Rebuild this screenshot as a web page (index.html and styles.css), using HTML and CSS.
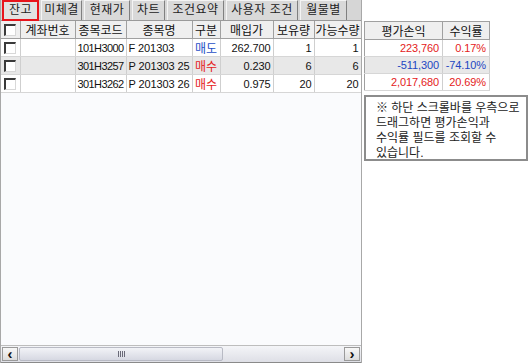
FILE: index.html
```html
<!DOCTYPE html>
<html lang="ko">
<head>
  <meta charset="UTF-8">
  <title>잔고</title>
  <link rel="stylesheet" href="styles.css">
</head>
<body>
  <div class="screen">

    <!-- Left grid panel -->
    <div class="panel">
      <div class="tabs">
        <div class="tab active">잔고</div>
        <div class="tab">미체결</div>
        <div class="tab">현재가</div>
        <div class="tab">차트</div>
        <div class="tab">조건요약</div>
        <div class="tab">사용자 조건</div>
        <div class="tab">월물별</div>
      </div>

      <div class="grid">
        <table class="balance">
          <colgroup>
            <col style="width:19px"><col style="width:55px"><col style="width:51px"><col style="width:66px">
            <col style="width:28px"><col style="width:53px"><col style="width:41px"><col style="width:47px">
          </colgroup>
          <thead>
            <tr>
              <th><span class="check"></span></th>
              <th>계좌번호</th>
              <th>종목코드</th>
              <th>종목명</th>
              <th>구분</th>
              <th>매입가</th>
              <th>보유량</th>
              <th>가능수량</th>
            </tr>
          </thead>
          <tbody>
            <tr>
              <td><span class="check"></span></td>
              <td></td>
              <td class="left code">101H3000</td>
              <td class="left">F 201303</td>
              <td class="sell">매도</td>
              <td class="num">262.700</td>
              <td class="num">1</td>
              <td class="num">1</td>
            </tr>
            <tr class="alt">
              <td><span class="check"></span></td>
              <td></td>
              <td class="left code">301H3257</td>
              <td class="left">P 201303 25</td>
              <td class="buy">매수</td>
              <td class="num">0.230</td>
              <td class="num">6</td>
              <td class="num">6</td>
            </tr>
            <tr>
              <td><span class="check"></span></td>
              <td></td>
              <td class="left code">301H3262</td>
              <td class="left">P 201303 26</td>
              <td class="buy">매수</td>
              <td class="num">0.975</td>
              <td class="num">20</td>
              <td class="num">20</td>
            </tr>
          </tbody>
        </table>
      </div>

      <div class="hscroll">
        <div class="arrow">&#8249;</div>
        <div class="track">
          <div class="thumb"><span class="grip"></span></div>
        </div>
        <div class="arrow">&#8250;</div>
      </div>
    </div>

    <!-- Right profit panel -->
    <div class="side">
      <table class="profit">
        <colgroup>
          <col style="width:78px"><col style="width:47px">
        </colgroup>
        <thead>
          <tr>
            <th>평가손익</th>
            <th>수익률</th>
          </tr>
        </thead>
        <tbody>
          <tr>
            <td class="num up">223,760</td>
            <td class="num up">0.17%</td>
          </tr>
          <tr class="alt">
            <td class="num down">-511,300</td>
            <td class="num down">-74.10%</td>
          </tr>
          <tr>
            <td class="num up">2,017,680</td>
            <td class="num up">20.69%</td>
          </tr>
        </tbody>
      </table>

      <div class="note">
        ※ 하단 스크롤바를 우측으로<br>
        드래그하면 평가손익과<br>
        수익률 필드를 조회할 수<br>
        있습니다.
      </div>
    </div>

  </div>
</body>
</html>
```

FILE: styles.css
```css
* {
  margin: 0;
  padding: 0;
  box-sizing: border-box;
}

body {
  background-color: #fff;
  color: #111;
  font-family: "Liberation Sans", "Noto Sans CJK KR", sans-serif;
  font-size: 12px;
}

.screen {
  display: flex;
  width: 530px;
  height: 363px;
}

/* Left panel */
.panel {
  width: 362px;
  display: flex;
  flex-direction: column;
  border-left: 1px solid #a8a8a8;
  border-right: 1px solid #a8a8a8;
}

.tabs {
  display: flex;
  height: 21px;
  background-color: #d6d6d6;
  border-bottom: 1px solid #9a9a9a;
  padding-left: 1px;
  gap: 2px;
}

.tab {
  height: 20px;
  line-height: 18px;
  text-align: center;
  background-color: #d9d9d9;
  border-top: 1px solid #f4f4f4;
  border-left: 1px solid #f4f4f4;
  border-right: 1px solid #808080;
  color: #222;
  letter-spacing: 0.5px;
}

.tab.active {
  width: 37px;
  height: 21px;
  background-color: #e2e2e2;
  border: 2px solid #e8141c;
  line-height: 16px;
}

.tabs .tab:nth-child(2) { width: 41px; }
.tabs .tab:nth-child(3) { width: 46px; }
.tabs .tab:nth-child(4) { width: 33px; }
.tabs .tab:nth-child(5) { width: 57px; }
.tabs .tab:nth-child(6) { width: 72px; }
.tabs .tab:nth-child(7) { width: 47px; }

.grid {
  flex: 1;
  background-color: #fafbfd;
  overflow: hidden;
}

table {
  border-collapse: collapse;
  table-layout: fixed;
}

.balance {
  width: 360px;
}

th {
  height: 16px;
  font-weight: normal;
  background-color: #efefef;
  border-right: 1px solid #a0a0a0;
  border-bottom: 1px solid #a0a0a0;
  text-align: center;
  white-space: nowrap;
  overflow: hidden;
  padding: 0;
}

td {
  height: 17px;
  background-color: #fff;
  border-right: 1px solid #cfcfcf;
  border-bottom: 1px solid #d6d6d6;
  white-space: nowrap;
  overflow: hidden;
  text-align: center;
  padding: 0 2px;
}

tr.alt td {
  background-color: #e8e8e8;
}

td.left,
td.num {
  font-size: 11px;
  letter-spacing: -0.1px;
}

td.left { text-align: left; }
td.num { text-align: right; }

td.code {
  padding: 0 0 0 2px;
  letter-spacing: -0.6px;
}

.sell { color: #1f4fc6; }
.buy { color: #e42121; }
.up { color: #e42121; }
.down { color: #2246c2; }

.check {
  display: inline-block;
  width: 12px;
  height: 12px;
  vertical-align: middle;
  background-color: #fff;
  border-top: 2px solid #3a3a3a;
  border-left: 2px solid #3a3a3a;
  border-right: 1px solid #d8d8d8;
  border-bottom: 1px solid #d8d8d8;
}

/* Horizontal scrollbar */
.hscroll {
  display: flex;
  height: 18px;
  border-top: 1px solid #bdbdbd;
  border-bottom: 1px solid #8a8a8a;
  background: linear-gradient(#f4f5f8, #dedfe6);
}

.arrow {
  width: 16px;
  margin: 1px;
  background: linear-gradient(#f8f8f8, #dcdcdc);
  border: 1px solid #9a9a9a;
  font-size: 15px;
  font-weight: bold;
  line-height: 12px;
  text-align: center;
  color: #111;
}

.track {
  flex: 1;
  display: flex;
}

.thumb {
  width: 204px;
  margin: 1px 0;
  border: 1px solid #b8bac4;
  border-radius: 2px;
  background: linear-gradient(#f2f3f7, #d6d8e2);
  display: flex;
  justify-content: center;
  align-items: center;
}

.grip {
  width: 7px;
  height: 6px;
  background: repeating-linear-gradient(90deg, #6a6a78 0 1px, transparent 1px 2px);
}

/* Right side */
.side {
  flex: 1;
  padding-top: 21px;
  padding-left: 2px;
}

.profit {
  width: 125px;
  border-left: 1px solid #a0a0a0;
  border-top: 1px solid #a0a0a0;
}

.profit th {
  height: 16px;
}

.profit td.num {
  padding-right: 3px;
}

.note {
  margin-top: 4px;
  width: 164px;
  height: 66px;
  border: 2px solid #8c8c8c;
  padding: 4px 6px 0 10px;
  line-height: 15px;
  color: #222;
}
```
